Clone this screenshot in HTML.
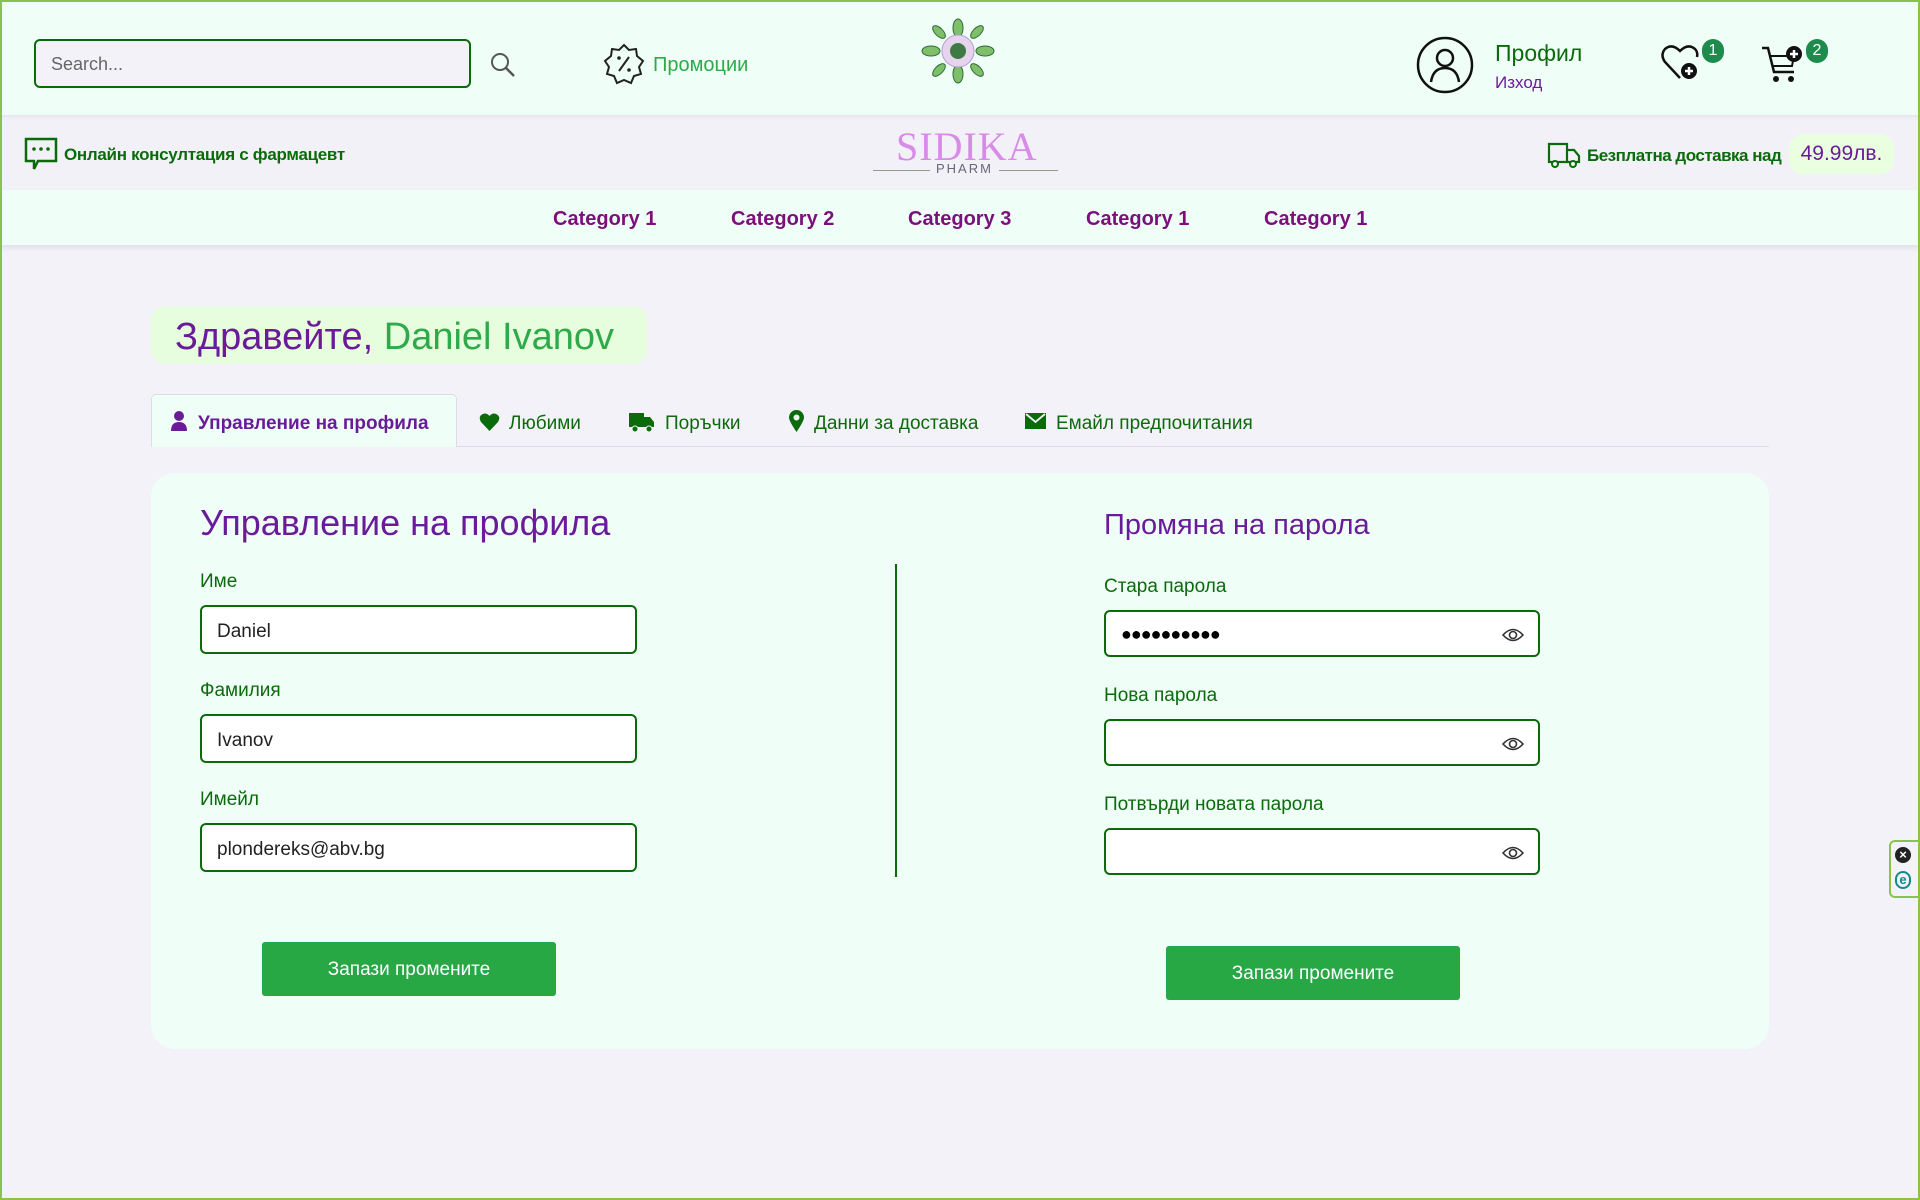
<!DOCTYPE html>
<html><head><meta charset="utf-8"><style>
*{box-sizing:border-box;margin:0;padding:0}
body{width:1920px;height:1200px;overflow:hidden;background:#f3f2f8;font-family:"Liberation Sans","DejaVu Sans",sans-serif;position:relative}
.a{position:absolute}
.frame{position:absolute;left:0;top:0;width:1920px;height:1200px;border:2px solid #8bc34a;pointer-events:none;z-index:50}
.top{left:0;top:0;width:1920px;height:115px;background:#efffF7}
.bar2{left:0;top:115px;width:1920px;height:75px;background:#f3f1f8;box-shadow:0 2px 4px rgba(0,0,0,.06) inset}
.cat{left:0;top:190px;width:1920px;height:55px;background:#effff8;box-shadow:0 3px 5px rgba(0,0,0,.08)}
.catl{top:208px;font-weight:bold;color:#7b0f7b;font-size:20px}
.inp{background:#fff;border:2px solid #0b6b0b;border-radius:6px;height:49px;font-size:19px;color:#222;padding:14px 0 0 15px}
.lbl{font-size:19px;color:#0b6b0b}
.btn{background:#28a745;color:#fff;font-size:19px;border-radius:3px;text-align:center;line-height:54px;height:54px;width:294px}
.tab{top:412px;font-size:19px;color:#0b6b0b}
.eye{position:absolute;right:14px;top:15px}
</style></head><body>
<div class="frame"></div>
<div class="a top"></div>
<div class="a inp" style="left:34px;top:39px;width:437px;height:49px;background:#f3f2f8;color:#666;font-size:18px;padding-top:13px">Search...</div>
<svg class="a" style="left:490px;top:52px" width="26" height="26" viewBox="0 0 26 26"><circle cx="10" cy="10" r="8" fill="none" stroke="#555" stroke-width="2"/><line x1="16" y1="16" x2="24" y2="24" stroke="#555" stroke-width="2.5"/></svg>
<svg class="a" style="left:602px;top:42px" width="44" height="44" viewBox="0 0 44 44"><path d="M22 3 L27 8 L34 7 L35 14 L41 19 L37 25 L39 32 L32 34 L29 41 L22 38 L15 41 L12 34 L5 32 L7 25 L3 19 L9 14 L10 7 L17 8 Z" fill="none" stroke="#222" stroke-width="2"/><line x1="27" y1="15" x2="17" y2="29" stroke="#222" stroke-width="2"/><circle cx="17" cy="16" r="1.8" fill="#222"/><circle cx="27" cy="28" r="1.8" fill="#222"/></svg>
<div class="a" style="left:653px;top:54px;font-size:20px;color:#2eaa4a">Промоции</div>
<svg class="a" style="left:921px;top:18px" width="74" height="66" viewBox="0 0 74 66"><g fill="#7fbf6a" stroke="#2f6b3a" stroke-width="1"><ellipse cx="37" cy="10" rx="5" ry="9"/><ellipse cx="37" cy="56" rx="5" ry="9"/><ellipse cx="10" cy="33" rx="9" ry="5"/><ellipse cx="64" cy="33" rx="9" ry="5"/><ellipse cx="18" cy="14" rx="4" ry="8" transform="rotate(-45 18 14)"/><ellipse cx="56" cy="14" rx="4" ry="8" transform="rotate(45 56 14)"/><ellipse cx="18" cy="52" rx="4" ry="8" transform="rotate(45 18 52)"/><ellipse cx="56" cy="52" rx="4" ry="8" transform="rotate(-45 56 52)"/></g><circle cx="37" cy="33" r="16" fill="#e6d4ef" stroke="#b79bd0"/><circle cx="37" cy="33" r="8" fill="#3f7a45"/></svg>
<svg class="a" style="left:1415px;top:35px" width="60" height="60" viewBox="0 0 60 60"><circle cx="30" cy="30" r="27" fill="none" stroke="#111" stroke-width="2.5"/><circle cx="30" cy="23" r="8" fill="none" stroke="#111" stroke-width="2.5"/><path d="M16 47 Q18 33 30 33 Q42 33 44 47" fill="none" stroke="#111" stroke-width="2.5"/></svg>
<div class="a" style="left:1495px;top:40px;font-size:23px;color:#0b6b0b">Профил</div>
<div class="a" style="left:1495px;top:73px;font-size:17px;color:#6a1b9a">Изход</div>
<svg class="a" style="left:1660px;top:42px" width="44" height="42" viewBox="0 0 44 42"><path d="M20 36 L5 20 Q0 13 5 7 Q12 1 20 9 Q28 1 35 7 Q38 10 37 15" fill="none" stroke="#111" stroke-width="2.5"/><circle cx="29" cy="29" r="8" fill="#111"/><path d="M29 25v8M25 29h8" stroke="#fff" stroke-width="2.5"/></svg>
<div class="a" style="left:1702px;top:39px;width:22px;height:24px;border-radius:11px;background:#1e8a4c;color:#fff;font-size:16px;text-align:center;line-height:24px">1</div>
<svg class="a" style="left:1760px;top:44px" width="48" height="42" viewBox="0 0 48 42"><path d="M2 4 L8 4 L14 28 L34 28" fill="none" stroke="#111" stroke-width="2.5"/><path d="M10 12 L34 12 L32 22 L13 22" fill="none" stroke="#111" stroke-width="2"/><circle cx="16" cy="35" r="3" fill="#111"/><circle cx="31" cy="35" r="3" fill="#111"/><circle cx="34" cy="10" r="8" fill="#111"/><path d="M34 6v8M30 10h8" stroke="#fff" stroke-width="2.5"/></svg>
<div class="a" style="left:1806px;top:39px;width:22px;height:24px;border-radius:11px;background:#1e8a4c;color:#fff;font-size:16px;text-align:center;line-height:24px">2</div>

<div class="a bar2"></div>
<svg class="a" style="left:24px;top:137px" width="34" height="34" viewBox="0 0 34 34"><path d="M2 2 H32 V24 H14 L10 32 V24 H2 Z" fill="none" stroke="#0b6b0b" stroke-width="2.5"/><circle cx="10" cy="12" r="1.8" fill="#0b6b0b"/><circle cx="17" cy="12" r="1.8" fill="#0b6b0b"/><circle cx="24" cy="12" r="1.8" fill="#0b6b0b"/></svg>
<div class="a" style="left:64px;top:145px;font-size:17px;font-weight:bold;color:#0b6b0b;letter-spacing:-.3px">Онлайн консултация с фармацевт</div>
<div class="a" style="left:896px;top:123px;font-family:'Liberation Serif',serif;font-size:40px;color:#d98be8;letter-spacing:1px">SIDIKA</div>
<div class="a" style="left:873px;top:170px;width:185px;height:1px;background:#8aa08a"></div>
<div class="a" style="left:930px;top:161px;font-size:13px;color:#667;background:#f3f1f8;padding:0 6px;letter-spacing:2px">PHARM</div>
<svg class="a" style="left:1547px;top:141px" width="34" height="28" viewBox="0 0 34 28"><path d="M2 3 H20 V21 H2 Z M20 9 H27 L32 15 V21 H20" fill="none" stroke="#0b6b0b" stroke-width="2.2"/><circle cx="8" cy="23" r="3" fill="#f3f1f8" stroke="#0b6b0b" stroke-width="2"/><circle cx="26" cy="23" r="3" fill="#f3f1f8" stroke="#0b6b0b" stroke-width="2"/></svg>
<div class="a" style="left:1587px;top:146px;font-size:17px;font-weight:bold;color:#0b6b0b;letter-spacing:-.5px">Безплатна доставка над</div>
<div class="a" style="left:1789px;top:134px;width:105px;height:40px;border-radius:14px;background:#eaffe0;color:#6a1b9a;font-size:21px;text-align:center;line-height:40px">49.99лв.</div>

<div class="a cat"></div>
<div class="a catl" style="left:553px">Category 1</div>
<div class="a catl" style="left:731px">Category 2</div>
<div class="a catl" style="left:908px">Category 3</div>
<div class="a catl" style="left:1086px">Category 1</div>
<div class="a catl" style="left:1264px">Category 1</div>

<div class="a" style="left:151px;top:306px;width:496px;height:58px;border-radius:14px;background:#e6fedd;font-size:38px;color:#6a1b9a;padding:10px 0 0 24px">Здравейте, <span style="color:#2eaa4a">Daniel Ivanov</span></div>

<div class="a" style="left:151px;top:446px;width:1618px;height:1px;background:#dcdce4"></div>
<div class="a" style="left:151px;top:394px;width:306px;height:53px;background:#effff8;border:1px solid #dcdce4;border-bottom:none;border-radius:5px 5px 0 0"></div>
<svg class="a" style="left:170px;top:411px" width="18" height="20" viewBox="0 0 18 20"><circle cx="9" cy="5" r="5" fill="#6a1b9a"/><path d="M1 20 Q1 11 9 11 Q17 11 17 20Z" fill="#6a1b9a"/></svg>
<div class="a tab" style="left:198px;top:413px;color:#6a1b9a;font-weight:bold">Управление на профила</div>
<svg class="a" style="left:479px;top:413px" width="21" height="18" viewBox="0 0 21 18"><path d="M10.5 18 L2 9 Q-1 4 3 1.5 Q7 -1 10.5 3 Q14 -1 18 1.5 Q22 4 19 9Z" fill="#0b6b0b"/></svg>
<div class="a tab" style="left:509px;top:413px">Любими</div>
<svg class="a" style="left:629px;top:411px" width="26" height="22" viewBox="0 0 26 22"><rect x="0" y="2" width="15" height="14" fill="#0b6b0b"/><path d="M15 6 H21 L25 11 V16 H15Z" fill="#0b6b0b"/><circle cx="6" cy="18" r="3" fill="#0b6b0b" stroke="#f3f2f8"/><circle cx="20" cy="18" r="3" fill="#0b6b0b" stroke="#f3f2f8"/></svg>
<div class="a tab" style="left:665px;top:413px">Поръчки</div>
<svg class="a" style="left:789px;top:410px" width="15" height="22" viewBox="0 0 15 22"><path d="M7.5 22 Q0 11 0 7.5 A7.5 7.5 0 0 1 15 7.5 Q15 11 7.5 22Z" fill="#0b6b0b"/><circle cx="7.5" cy="7.5" r="3" fill="#f3f2f8"/></svg>
<div class="a tab" style="left:814px;top:413px">Данни за доставка</div>
<svg class="a" style="left:1025px;top:413px" width="21" height="16" viewBox="0 0 21 16"><rect width="21" height="16" fill="#0b6b0b"/><path d="M1 1 L10.5 9 L20 1" fill="none" stroke="#f3f2f8" stroke-width="1.8"/></svg>
<div class="a tab" style="left:1056px;top:413px">Емайл предпочитания</div>

<div class="a" style="left:151px;top:473px;width:1618px;height:576px;border-radius:24px;background:#effff8"></div>
<div class="a" style="left:200px;top:502px;font-size:36px;color:#6a1b9a">Управление на профила</div>
<div class="a lbl" style="left:200px;top:571px">Име</div>
<div class="a inp" style="left:200px;top:605px;width:437px">Daniel</div>
<div class="a lbl" style="left:200px;top:680px">Фамилия</div>
<div class="a inp" style="left:200px;top:714px;width:437px">Ivanov</div>
<div class="a lbl" style="left:200px;top:789px">Имейл</div>
<div class="a inp" style="left:200px;top:823px;width:437px">plondereks@abv.bg</div>
<div class="a" style="left:895px;top:564px;width:1.5px;height:313px;background:#0b6b0b"></div>
<div class="a btn" style="left:262px;top:942px;line-height:56px">Запази промените</div>

<div class="a" style="left:1104px;top:509px;font-size:29px;color:#6a1b9a">Промяна на парола</div>
<div class="a lbl" style="left:1104px;top:576px">Стара парола</div>
<div class="a inp" style="left:1104px;top:610px;width:436px;height:47px;font-size:18px;padding-top:12px;letter-spacing:-1px;color:#000">●●●●●●●●●●<svg class="eye" width="22" height="16" viewBox="0 0 22 16"><path d="M1 8 Q11 -3 21 8 Q11 19 1 8Z" fill="none" stroke="#333" stroke-width="1.6"/><circle cx="11" cy="8" r="3.5" fill="none" stroke="#333" stroke-width="1.6"/></svg></div>
<div class="a lbl" style="left:1104px;top:685px">Нова парола</div>
<div class="a inp" style="left:1104px;top:719px;width:436px;height:47px"><svg class="eye" width="22" height="16" viewBox="0 0 22 16"><path d="M1 8 Q11 -3 21 8 Q11 19 1 8Z" fill="none" stroke="#333" stroke-width="1.6"/><circle cx="11" cy="8" r="3.5" fill="none" stroke="#333" stroke-width="1.6"/></svg></div>
<div class="a lbl" style="left:1104px;top:794px">Потвърди новата парола</div>
<div class="a inp" style="left:1104px;top:828px;width:436px;height:47px"><svg class="eye" width="22" height="16" viewBox="0 0 22 16"><path d="M1 8 Q11 -3 21 8 Q11 19 1 8Z" fill="none" stroke="#333" stroke-width="1.6"/><circle cx="11" cy="8" r="3.5" fill="none" stroke="#333" stroke-width="1.6"/></svg></div>
<div class="a btn" style="left:1166px;top:946px;line-height:56px">Запази промените</div>

<div class="a" style="left:1889px;top:840px;width:31px;height:58px;border:2px solid #8bc34a;border-right:none;border-radius:6px 0 0 6px;background:#f3f2f8"></div>
<div class="a" style="left:1895px;top:847px;width:16px;height:16px;border-radius:8px;background:#222;color:#fff;font-size:13px;line-height:16px;text-align:center;font-weight:bold">×</div>
<div class="a" style="left:1895px;top:871px;width:16px;height:18px;border-radius:8px;border:2px solid #138a8a;color:#138a8a;font-size:13px;line-height:14px;text-align:center;font-weight:bold">e</div>
</body></html>
